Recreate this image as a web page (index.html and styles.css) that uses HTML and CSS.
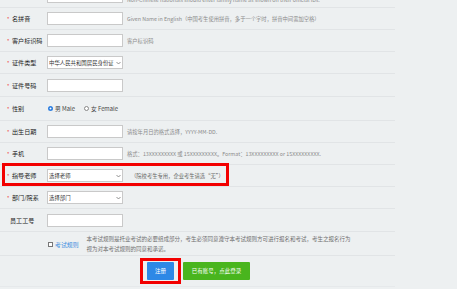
FILE: index.html
```html
<!DOCTYPE html>
<html lang="zh-CN">
<head>
  <meta charset="UTF-8" />
  <meta name="viewport" content="width=device-width, initial-scale=1.0"/>
  <title>托业考试注册</title>
  <link rel="stylesheet" href="styles.css">
</head>
<body>
  <div class="form">
    <div class="row">
      <label class="label label-top"><span class="star">*</span>姓拼音</label>
      <input type="text" class="field" />
      <span class="hint hint-low">Non-Chinese nationals should enter family name as shown on their official IDs.</span>
    </div>

    <div class="row">
      <label class="label"><span class="star">*</span>名拼音</label>
      <input type="text" class="field" />
      <span class="hint">Given Name in English（中国考生使用拼音，多于一个字时，拼音中间需加空格）</span>
    </div>

    <div class="row">
      <label class="label"><span class="star">*</span>客户标识码</label>
      <input type="text" class="field" />
      <span class="hint">客户标识码</span>
    </div>

    <div class="row">
      <label class="label"><span class="star">*</span>证件类型</label>
      <div class="select-wrap">
        <select class="field select">
          <option>中华人民共和国居民身份证</option>
          <option>护照</option>
        </select>
        <svg class="chevron" width="5" height="4" viewBox="0 0 5 4"><path d="M0.5 1 L2.5 3 L4.5 1" fill="none" stroke="#666" stroke-width="0.7"/></svg>
      </div>
    </div>

    <div class="row row-tall">
      <label class="label"><span class="star">*</span>证件号码</label>
      <input type="text" class="field" />
    </div>

    <div class="row row-gender">
      <label class="label"><span class="star">*</span>性别</label>
      <div class="radios">
        <span class="radio radio-on"></span><span class="radio-text">男 Male</span>
        <span class="radio"></span><span class="radio-text">女 Female</span>
      </div>
    </div>

    <div class="row">
      <label class="label"><span class="star">*</span>出生日期</label>
      <input type="text" class="field" />
      <span class="hint">请按年月日的格式选择，YYYY-MM-DD.</span>
    </div>

    <div class="row">
      <label class="label"><span class="star">*</span>手机</label>
      <input type="text" class="field" />
      <span class="hint">格式：13XXXXXXXXX 或 15XXXXXXXXX。Format：13XXXXXXXXX or 15XXXXXXXXX.</span>
    </div>

    <div class="row">
      <label class="label"><span class="star">*</span>指导老师</label>
      <div class="select-wrap">
        <select class="field select">
          <option>选择老师</option>
        </select>
        <svg class="chevron" width="5" height="4" viewBox="0 0 5 4"><path d="M0.5 1 L2.5 3 L4.5 1" fill="none" stroke="#666" stroke-width="0.7"/></svg>
      </div>
      <span class="hint hint-note">（院校考生专用，企业考生请选“无”）</span>
      <div class="mark mark-row"></div>
    </div>

    <div class="row">
      <label class="label"><span class="star">*</span>部门/院系</label>
      <div class="select-wrap">
        <select class="field select">
          <option>选择部门</option>
        </select>
        <svg class="chevron" width="5" height="4" viewBox="0 0 5 4"><path d="M0.5 1 L2.5 3 L4.5 1" fill="none" stroke="#666" stroke-width="0.7"/></svg>
      </div>
    </div>

    <div class="row row-tall">
      <label class="label label-plain">员工工号</label>
      <input type="text" class="field" />
    </div>

    <div class="row row-rules">
      <div class="rules-check">
        <span class="checkbox"></span>
        <a href="#" class="rules-link">考试规则</a>
      </div>
      <p class="rules-text">本考试规则是托业考试的必要组成部分，考生必须同意遵守本考试规则方可进行报名和考试，考生之报名行为<br>视为对本考试规则的同意和承诺。</p>
    </div>

    <div class="row row-buttons">
      <div class="btn-wrap">
        <button class="btn btn-blue">注册</button>
        <div class="mark mark-btn"></div>
      </div>
      <button class="btn btn-green">已有账号，点此登录</button>
    </div>
  </div>
</body>
</html>
```

FILE: styles.css
```css
body {
  margin: 0;
  font-family: "Noto Sans CJK SC", "Liberation Sans", sans-serif;
  background-color: #edf0f1;
  color: #333;
  overflow: hidden;
}

.form {
  width: 395px;
  margin-top: -14px;
}

.row {
  position: relative;
  display: flex;
  align-items: center;
  height: 21px;
  border-bottom: 1px solid #e1e4e6;
}

.row-tall {
  height: 22px;
}

.row-gender {
  height: 23px;
}

.label {
  width: 40px;
  padding-left: 7px;
  font-size: 6.1px;
  color: #222;
  white-space: nowrap;
}

.label-top {
  align-self: flex-start;
  margin-top: -8px;
}

.label-plain {
  padding-left: 10px;
  width: 37px;
}

.star {
  color: #e33;
  display: inline-block;
  width: 5px;
  font-size: 5px;
}

.field {
  box-sizing: border-box;
  width: 76px;
  height: 13px;
  margin: 0;
  padding: 0 2px;
  border: 1px solid #c9c9c9;
  background-color: white;
  font-family: inherit;
  font-size: 5.4px;
  color: #333;
  outline: none;
}

.select-wrap {
  position: relative;
  display: flex;
}

.select {
  appearance: none;
  -webkit-appearance: none;
  padding-left: 1px;
}

.chevron {
  position: absolute;
  right: 2px;
  top: 5px;
}

.hint {
  margin-left: 4px;
  font-size: 5.3px;
  color: #8a8a8a;
  white-space: nowrap;
}

.hint-low {
  padding-top: 7px;
}

.hint-note {
  margin-left: 8px;
  color: #666;
}

.radios {
  display: flex;
  align-items: center;
}

.radio {
  box-sizing: border-box;
  width: 5px;
  height: 5px;
  margin-left: 1px;
  border: 0.6px solid #888;
  border-radius: 50%;
  background: white;
}

.radio + .radio-text + .radio {
  margin-left: 9px;
}

.radio-on {
  border: none;
  background: radial-gradient(circle, white 0 0.8px, #2f7fdf 1.1px);
}

.radio-text {
  margin-left: 2px;
  font-size: 5.8px;
  color: #444;
}

.row-rules {
  height: 23px;
  align-items: flex-start;
}

.rules-check {
  display: flex;
  align-items: center;
  margin-left: 48px;
  margin-top: 8px;
}

.checkbox {
  box-sizing: border-box;
  width: 5px;
  height: 5px;
  border: 0.6px solid #777;
  background: white;
}

.rules-link {
  margin-left: 2px;
  font-size: 5.9px;
  color: #3d8fe0;
  text-decoration: none;
}

.rules-text {
  margin: 3px 0 0 8px;
  font-size: 5.5px;
  line-height: 9.5px;
  color: #6f6f6f;
  white-space: nowrap;
}

.row-buttons {
  height: 30px;
  padding-left: 147px;
  gap: 9px;
  border-bottom: 1px solid #e6e9eb;
}

.btn-wrap {
  position: relative;
  display: flex;
}

.btn {
  height: 18px;
  border: none;
  border-radius: 1px;
  color: white;
  font-family: inherit;
  font-size: 5.5px;
  padding: 0;
  cursor: pointer;
}

.btn-blue {
  width: 27px;
  background-color: #2d88e6;
}

.btn-green {
  width: 67px;
  background-color: #49b51e;
}

.mark {
  position: absolute;
  box-sizing: border-box;
  border: 3px solid #f20000;
  pointer-events: none;
}

.mark-row {
  left: 2px;
  top: -2px;
  width: 227px;
  height: 23px;
}

.mark-btn {
  left: -7px;
  top: -4px;
  width: 41px;
  height: 26px;
}
```
